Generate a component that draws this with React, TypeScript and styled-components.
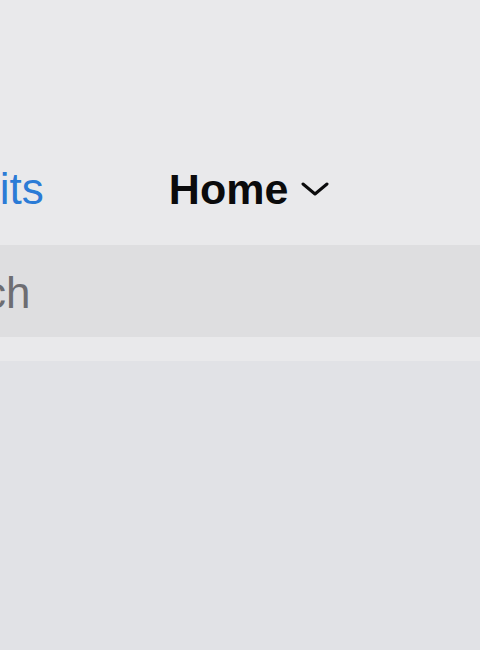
import React from 'react';
import styled, { createGlobalStyle } from 'styled-components';

const GlobalStyle = createGlobalStyle`
  html, body {
    margin: 0;
    padding: 0;
    background: #e1e2e6;
    overflow: hidden;
  }
  body {
    font-family: "Liberation Sans", Arial, sans-serif;
  }
`;

const Screen = styled.div`
  width: 480px;
  height: 650px;
  display: flex;
  flex-direction: column;
  overflow: hidden;
  background: #e1e2e6;
`;

const Header = styled.header`
  background: #e9e9eb;
  padding-top: 149px;
  display: flex;
  flex-direction: column;
`;

const NavRow = styled.div`
  height: 80px;
  display: flex;
  align-items: center;
  white-space: nowrap;
`;

const NavButton = styled.span`
  margin-left: -54px;
  font-size: 44px;
  line-height: 80px;
  color: #2b7bd6;
`;

const TitleButton = styled.span`
  margin-left: 125px;
  display: flex;
  align-items: center;
  gap: 13px;
  font-size: 43px;
  font-weight: 700;
  line-height: 80px;
  color: #0b0b0c;
`;

const SearchWrap = styled.div`
  padding: 16px 0 24px;
`;

const SearchField = styled.div`
  height: 92px;
  background: #dedee0;
  display: flex;
  align-items: center;
  white-space: nowrap;
  overflow: hidden;
`;

const Placeholder = styled.span`
  margin-left: -109px;
  padding-top: 3px;
  font-size: 44px;
  line-height: 92px;
  color: #6d6d72;
`;

const Content = styled.main`
  flex: 1;
  background: #e1e2e6;
`;

const Chevron = () => (
  <svg width="28" height="14" viewBox="0 0 28 14" fill="none">
    <polyline
      points="2,2 14,12 26,2"
      stroke="#0b0b0c"
      strokeWidth="3"
      strokeLinecap="round"
      strokeLinejoin="round"
    />
  </svg>
);

const App: React.FunctionComponent = () => (
  <>
    <GlobalStyle />
    <Screen>
      <Header>
        <NavRow>
          <NavButton>Edits</NavButton>
          <TitleButton>
            Home
            <Chevron />
          </TitleButton>
        </NavRow>
        <SearchWrap>
          <SearchField>
            <Placeholder>Search</Placeholder>
          </SearchField>
        </SearchWrap>
      </Header>
      <Content />
    </Screen>
  </>
);

export default App;
